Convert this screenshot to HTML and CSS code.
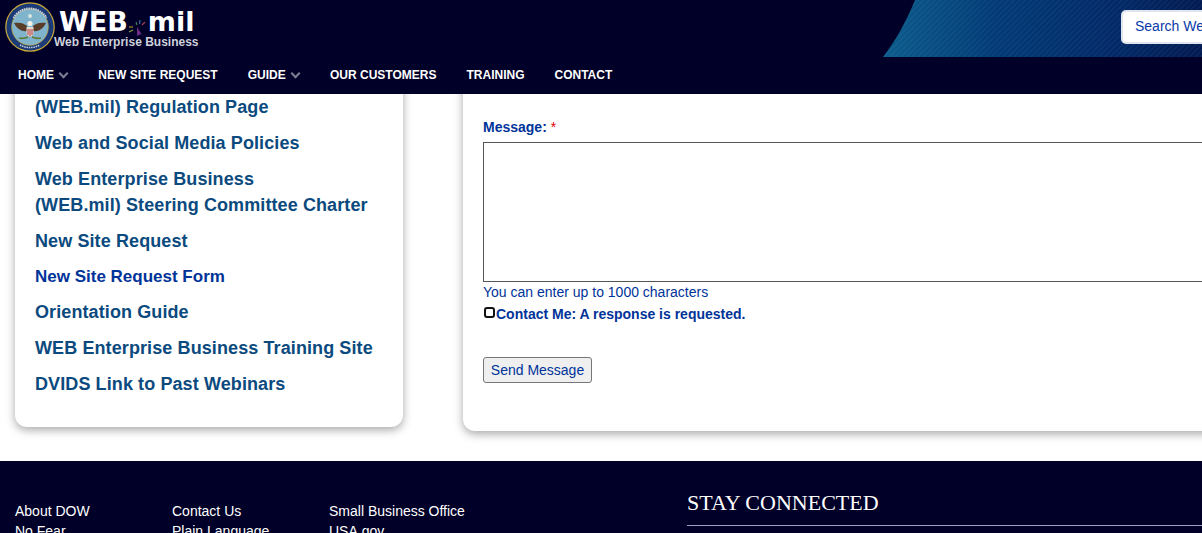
FILE: index.html
```html
<!DOCTYPE html>
<html lang="en">
<head>
    <meta charset="UTF-8">
    <meta name="viewport" content="width=device-width, initial-scale=1.0">
    <title>WEB.mil Contact</title>
    <link rel="stylesheet" href="styles.css">
</head>

<body>
    <header class="site-header">
        <svg class="header-art" viewBox="0 0 319 57" preserveAspectRatio="none" aria-hidden="true">
            <defs>
                <linearGradient id="artFill" x1="0" x2="1" y1="0" y2="0">
                    <stop offset="0" stop-color="#0b5c8c"/>
                    <stop offset="0.35" stop-color="#013a75"/>
                    <stop offset="0.7" stop-color="#012a68"/>
                    <stop offset="1" stop-color="#011a52"/>
                </linearGradient>
                <pattern id="artLines" width="4" height="4" patternUnits="userSpaceOnUse" patternTransform="rotate(45)">
                    <rect width="1.5" height="4" fill="#ffffff" opacity="0.05"/>
                </pattern>
            </defs>
            <path d="M32 0 C24 20 12 42 0 57 L319 57 L319 0 Z" fill="url(#artFill)"/>
            <path d="M32 0 C24 20 12 42 0 57 L319 57 L319 0 Z" fill="url(#artLines)"/>
        </svg>

        <div class="top-bar">
            <a class="logo" href="#">
                <svg class="seal" viewBox="0 0 50 50" aria-hidden="true">
                    <circle cx="25" cy="25" r="24.8" fill="#c9a93a"/>
                    <circle cx="25" cy="25" r="23.6" fill="#1b3a78"/>
                    <circle cx="25" cy="25" r="18.3" fill="#7fb4cc" stroke="#c9a93a" stroke-width="0.7"/>
                    <path d="M9 21 C14 20 19 21 22 24 L22 29 C17 30 12 27 9 21 Z" fill="#5a3d28"/>
                    <path d="M41 21 C36 20 31 21 28 24 L28 29 C33 30 38 27 41 21 Z" fill="#5a3d28"/>
                    <circle cx="25" cy="21.500" r="2.600" fill="#f4f1e6"/>
                    <path d="M21.500 25 L28.500 25 L28.500 31 C28.500 33 26.500 34.500 25 35 C23.500 34.500 21.500 33 21.500 31 Z" fill="#e4ddd0"/>
                    <path d="M23 27 V33 M25 27 V34.500 M27 27 V33" stroke="#b5353f" stroke-width="1"/>
                    <path d="M14 36 C18 37 21 36 23 35 M36 36 C32 37 29 36 27 35" stroke="#5f7a35" stroke-width="1.600" fill="none"/>
                    <circle cx="25" cy="14" r="2" fill="#eef0e6" opacity="0.8"/>
                    <path d="M8.500 16 A19 19 0 0 1 41.500 16" stroke="#c7d0e2" stroke-width="2" stroke-dasharray="1.500 0.800" fill="none"/>
                    <path d="M15 43 A20.500 20.500 0 0 0 35 43" stroke="#c7d0e2" stroke-width="1.600" stroke-dasharray="1.500 0.800" fill="none"/>
                </svg>
                <div class="logo-text">
                    <div class="logo-name">
                        <span>WEB</span>
                        <svg class="spark" viewBox="0 0 20 20" aria-hidden="true">
                            <path d="M9 8 L16 19 L13 15 L9 17 Z" fill="#6d2f86"/>
                            <path d="M8 3 L9 6" stroke="#3f7a52" stroke-width="1.200"/>
                            <path d="M12 1 L11.500 5" stroke="#3a6aa0" stroke-width="1.200"/>
                            <path d="M17 3 L14 6" stroke="#a03a5c" stroke-width="1.200"/>
                            <path d="M1 8 L5 8" stroke="#b08a2e" stroke-width="1.200"/>
                            <path d="M1 13 L5 11" stroke="#8aa03a" stroke-width="1.200"/>
                        </svg>
                        <span>mil</span>
                    </div>
                    <div class="logo-sub">Web Enterprise Business</div>
                </div>
            </a>
            <input class="search" placeholder="Search Web.mil">
        </div>

        <nav class="main-nav">
            <a href="#">Home <span class="chev"></span></a>
            <a href="#">New Site Request</a>
            <a href="#">Guide <span class="chev"></span></a>
            <a href="#">Our Customers</a>
            <a href="#">Training</a>
            <a href="#">Contact</a>
        </nav>
    </header>

    <main class="content">
        <aside class="side-card">
            <a class="side-link" href="#">(WEB.mil) Regulation Page</a>
            <a class="side-link" href="#">Web and Social Media Policies</a>
            <a class="side-link" href="#">Web Enterprise Business<br>(WEB.mil) Steering Committee Charter</a>
            <a class="side-link" href="#">New Site Request</a>
            <a class="side-link side-link-active" href="#">New Site Request Form</a>
            <a class="side-link" href="#">Orientation Guide</a>
            <a class="side-link" href="#">WEB Enterprise Business Training Site</a>
            <a class="side-link" href="#">DVIDS Link to Past Webinars</a>
        </aside>

        <section class="form-card">
            <label class="field-label" for="message">Message: <span class="req">*</span></label>
            <textarea class="message-box" id="message"></textarea>
            <div class="char-note">You can enter up to 1000 characters</div>
            <label class="contact-row">
                <input class="contact-check" type="checkbox">Contact Me: A response is requested.
            </label>
            <button class="send-btn">Send Message</button>
        </section>
    </main>

    <footer class="site-footer">
        <ul class="foot-col">
            <li>About DOW</li>
            <li>No Fear</li>
        </ul>
        <ul class="foot-col">
            <li>Contact Us</li>
            <li>Plain Language</li>
        </ul>
        <ul class="foot-col foot-col-wide">
            <li>Small Business Office</li>
            <li>USA.gov</li>
        </ul>
        <div class="stay">
            <h2>STAY CONNECTED</h2>
        </div>
    </footer>
</body>
</html>
```

FILE: styles.css
```css
body {
    margin: 0;
    height: 533px;
    overflow: hidden;
    background-color: #fff;
    font-family: "Liberation Sans", Arial, sans-serif;
}

a {
    text-decoration: none;
}

.site-header {
    position: relative;
    height: 94px;
    background-color: #000028;
    overflow: hidden;
}

.header-art {
    position: absolute;
    top: 0;
    left: 883px;
    width: 319px;
    height: 57px;
}

.top-bar {
    position: relative;
    display: flex;
    justify-content: space-between;
    align-items: flex-start;
    height: 57px;
}

.logo {
    display: flex;
    align-items: flex-start;
    padding: 2px 0 0 5px;
}

.seal {
    width: 50px;
    height: 50px;
    flex-shrink: 0;
}

.logo-text {
    margin-left: -1px;
    color: #fff;
}

.logo-name {
    display: flex;
    align-items: flex-end;
    height: 28px;
    margin-top: 6px;
    padding-left: 5px;
    font-family: "DejaVu Sans", sans-serif;
    font-size: 27px;
    line-height: 28px;
    font-weight: bold;
}

.spark {
    width: 20px;
    height: 20px;
    margin-bottom: -3px;
}

.logo-sub {
    margin-top: -1px;
    font-size: 12px;
    line-height: 14px;
    font-weight: bold;
    color: #cfd2dc;
    white-space: nowrap;
}

.search {
    flex-shrink: 0;
    box-sizing: border-box;
    width: 201px;
    height: 34px;
    margin: 10px -120px 0 0;
    padding: 0 12px 2px;
    border: 2px solid #dfe4ee;
    border-radius: 5px;
    background-color: #fff;
    font-family: inherit;
    font-size: 14px;
}

.search::placeholder {
    color: #0a3aa8;
    opacity: 1;
}

.main-nav {
    box-sizing: border-box;
    display: flex;
    align-items: center;
    gap: 30px;
    height: 37px;
    padding: 0 0 2px 18px;
}

.main-nav a {
    color: #fff;
    font-size: 12px;
    font-weight: bold;
    text-transform: uppercase;
}

.chev {
    display: inline-block;
    width: 5px;
    height: 5px;
    margin: 0 1px 2px 3px;
    border-right: 2px solid #7d8094;
    border-bottom: 2px solid #7d8094;
    transform: rotate(45deg);
}

.content {
    display: flex;
    align-items: flex-end;
    gap: 60px;
    height: 337px;
    padding: 0 0 30px 15px;
    overflow: hidden;
}

.side-card {
    flex-shrink: 0;
    box-sizing: border-box;
    display: flex;
    flex-direction: column;
    gap: 10px;
    width: 388px;
    margin-bottom: 4px;
    padding: 30px 20px;
    background-color: #fff;
    border-radius: 12px;
    box-shadow: 0 3px 10px rgba(0, 0, 0, 0.35);
}

.side-link {
    color: #0b4a7e;
    font-size: 18px;
    line-height: 26px;
    font-weight: bold;
    letter-spacing: 0.1px;
}

.side-link-active {
    color: #003399;
    font-size: 17px;
    line-height: 25px;
    letter-spacing: 0;
}

.form-card {
    flex-shrink: 0;
    box-sizing: border-box;
    width: 900px;
    padding: 60px 20px 48px;
    background-color: #fff;
    border-radius: 12px;
    box-shadow: 0 3px 10px rgba(0, 0, 0, 0.35);
    color: #003399;
}

.field-label {
    display: block;
    height: 22px;
    font-size: 14px;
    line-height: 15px;
    font-weight: bold;
}

.req {
    color: #e00000;
    font-weight: normal;
}

.message-box {
    display: block;
    box-sizing: border-box;
    width: 860px;
    height: 140px;
    border: 1px solid #555;
    resize: none;
}

.char-note {
    margin-top: 2px;
    font-size: 14px;
    line-height: 17px;
}

.contact-row {
    display: flex;
    align-items: center;
    height: 15px;
    margin-top: 5px;
    font-size: 14px;
    font-weight: bold;
}

.contact-check {
    appearance: none;
    box-sizing: border-box;
    width: 11px;
    height: 11px;
    margin: -3px 1px 0 1px;
    border: 2px solid #111;
    border-radius: 3px;
    background-color: #fff;
}

.send-btn {
    display: block;
    box-sizing: border-box;
    width: 109px;
    height: 26px;
    margin-top: 36px;
    padding: 0;
    border: 1px solid #767676;
    border-radius: 3px;
    background-color: #efefef;
    color: #003399;
    font-family: inherit;
    font-size: 14px;
}

.site-footer {
    box-sizing: border-box;
    display: flex;
    height: 72px;
    padding: 40px 0 0 15px;
    background-color: #000028;
    color: #fff;
    overflow: hidden;
}

.foot-col {
    flex-shrink: 0;
    width: 157px;
    margin: 0;
    padding: 0;
    list-style: none;
    font-size: 14px;
    line-height: 20px;
}

.foot-col-wide {
    width: 358px;
}

.stay {
    flex: 1;
}

.stay h2 {
    margin: -11px 0 0;
    padding-bottom: 10px;
    border-bottom: 1px solid #9aa3c0;
    font-family: "Liberation Serif", "Times New Roman", serif;
    font-size: 22px;
    line-height: 25px;
    font-weight: normal;
}
```
